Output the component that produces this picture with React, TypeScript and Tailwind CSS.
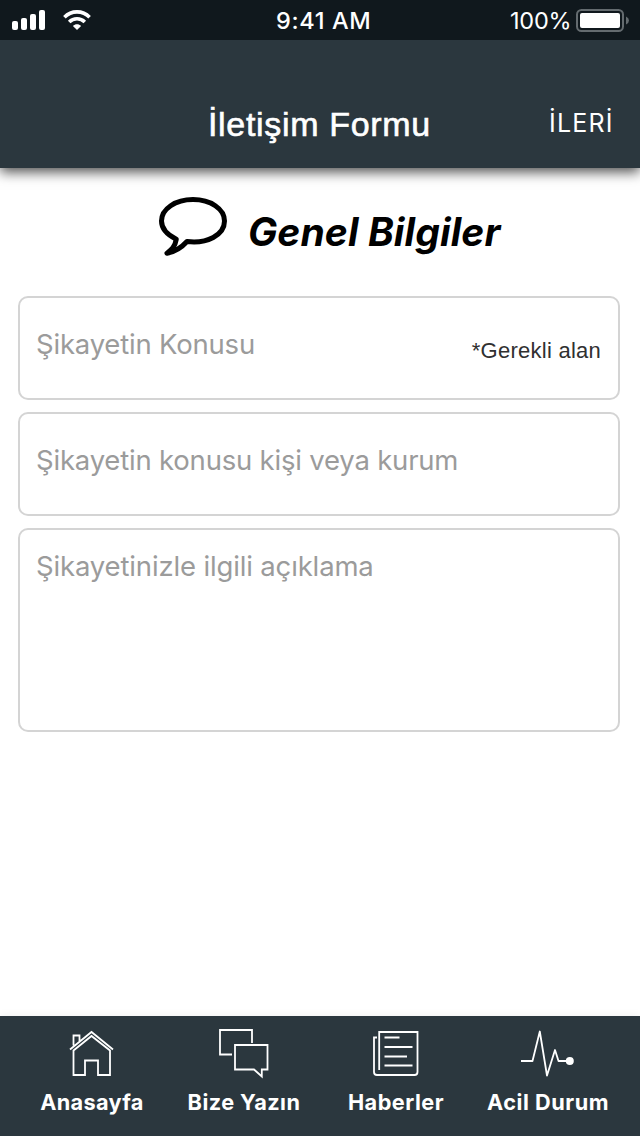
import type { ReactNode } from "react";

function StatusBar() {
  return (
    <div className="relative z-20 flex h-10 shrink-0 items-center bg-[#10181d] text-white">
      <svg className="ml-3 h-5 w-[33px]" viewBox="0 0 33 20" fill="currentColor">
        <rect x="0" y="11" width="6" height="9" rx="2" />
        <rect x="9" y="8" width="6" height="12" rx="2" />
        <rect x="18" y="4" width="6" height="16" rx="2" />
        <rect x="27" y="0" width="6" height="20" rx="2" />
      </svg>
      <svg className="ml-[18px] h-5 w-7" viewBox="0 0 28 20" fill="none" stroke="currentColor" strokeWidth="3.6">
        <path d="M1.4 7.2C8.4 0.1 19.6 0.1 26.6 7.2" />
        <path d="M6.2 12C10.5 7.7 17.5 7.7 21.8 12" />
        <path d="M14 20L9.9 15.9C12.2 13.8 15.8 13.8 18.1 15.9Z" fill="currentColor" stroke="none" />
      </svg>
      <span className="ml-[185px] w-[100px] whitespace-nowrap pt-px text-[23.5px] leading-10 font-medium tracking-[0.65px]">9:41 AM</span>
      <span className="ml-[134px] w-[66px] whitespace-nowrap pt-px text-[23.5px] leading-10 tracking-[-0.2px]">100%</span>
      <svg className="h-6 w-[54px] shrink-0" viewBox="0 0 54 24">
        <rect x="1" y="2" width="46" height="21" rx="4.5" fill="none" stroke="#646b6f" strokeWidth="2" />
        <rect x="4" y="5" width="40" height="15" rx="2" fill="#fff" />
        <path d="M50 8.5Q53 10 53 12.5T50 16.5Z" fill="#646b6f" />
      </svg>
    </div>
  );
}

function Tab({ label, spacing, children }: { label: string; spacing: string; children: ReactNode }) {
  return (
    <div className="flex flex-1 flex-col items-center">
      <svg className="h-[72px] w-[72px]" viewBox="0 0 72 72" fill="none" stroke="#fff" strokeWidth="1.8">
        {children}
      </svg>
      <span className={`whitespace-nowrap text-[21.7px] leading-7 font-[650] text-white ${spacing}`}>{label}</span>
    </div>
  );
}

export default function App() {
  return (
    <div className="flex h-[1136px] w-[640px] flex-col overflow-hidden bg-white font-['Inter','Liberation_Sans',sans-serif]">
      <StatusBar />
      <header className="z-10 flex h-32 shrink-0 bg-[#2b373e] pt-[60px] text-white shadow-[0_4px_12px_rgba(0,0,0,0.7)]">
        <h1 className="ml-[208px] w-[341px] whitespace-nowrap font-['Liberation_Sans',sans-serif] text-[34px] leading-[48px] font-normal tracking-[0.67px] [-webkit-text-stroke:0.6px_white]">İletişim Formu</h1>
        <span className="whitespace-nowrap text-[25px] leading-[46px] tracking-[1.2px]">İLERİ</span>
      </header>
      <main className="flex flex-1 flex-col px-[18px]">
        <div className="flex h-32 items-start pt-7">
          <svg className="ml-[140px] h-[62px] w-[70px]" viewBox="0 0 70 62" fill="none" stroke="#000" strokeWidth="5" strokeLinejoin="round">
            <path d="M35 3.6C17.5 3.6 3.5 12.8 3.5 25C3.5 32.5 9 38.6 18.3 43.2C17 50.5 14 53.5 9 57.2C18 55.5 24.5 50.5 29 45.5C49 48 66.5 39 66.5 25C66.5 12.8 52.5 3.6 35 3.6Z" />
          </svg>
          <h2 className="ml-5 mt-3 whitespace-nowrap text-[39px] leading-[48px] font-bold italic tracking-[0.1px]">Genel Bilgiler</h2>
        </div>
        <div className="flex h-[104px] w-[602px] justify-between rounded-[10px] border-2 border-[#d4d4d4] pr-[17px] pl-4 text-[27.5px] text-[#9b9b9b]">
          <span className="whitespace-nowrap leading-[92px] tracking-[-0.2px]">Şikayetin Konusu</span>
          <span className="whitespace-nowrap font-['Liberation_Sans',sans-serif] text-[22px] leading-[105px] tracking-[0.25px] text-[#303030]">*Gerekli alan</span>
        </div>
        <div className="mt-3 h-[104px] w-[602px] whitespace-nowrap rounded-[10px] border-2 border-[#d4d4d4] pl-4 text-[27.5px] leading-[92px] tracking-[-0.2px] text-[#9b9b9b]">Şikayetin konusu kişi veya kurum</div>
        <div className="mt-3 h-[204px] w-[602px] whitespace-nowrap rounded-[10px] border-2 border-[#d4d4d4] pl-4 text-[27.5px] leading-[72px] tracking-[-0.15px] text-[#9b9b9b]">Şikayetinizle ilgili açıklama</div>
      </main>
      <nav className="flex h-[120px] shrink-0 bg-[#2b373e] px-4 shadow-[0_-1px_8px_rgba(0,0,0,0.06)]">
        <Tab label="Anasayfa" spacing="tracking-[0.35px]">
          <path d="M14 33.5L35.5 16L57 33.5M17.5 34.5L35.5 20L54 34.5V59H42V44.5H29V59H17.5ZM17.5 29.5V19.5H23.5V25" />
        </Tab>
        <Tab label="Bize Yazın" spacing="tracking-[0.45px]">
          <path d="M24 38.5H12V14H44V27M27 29H59.5V53.5H53.8V60.5L46 53.5H27Z" />
        </Tab>
        <Tab label="Haberler" spacing="tracking-[0.5px]">
          <path d="M19.2 54V16H57.5V56Q57.5 59 54.5 59H17Q14 59 14 56V21.5H17M24.5 21.5H39.5M24.5 31H52.5M24.5 40.5H47M24.5 49.5H52.5" />
        </Tab>
        <Tab label="Acil Durum" spacing="tracking-[0.55px]">
          <path d="M9 45H20.5L27.8 15.5L35 59.5L43 34L46.5 45H57" strokeLinejoin="round" />
          <circle cx="57.8" cy="45" r="4" fill="#fff" stroke="none" />
        </Tab>
      </nav>
    </div>
  );
}
